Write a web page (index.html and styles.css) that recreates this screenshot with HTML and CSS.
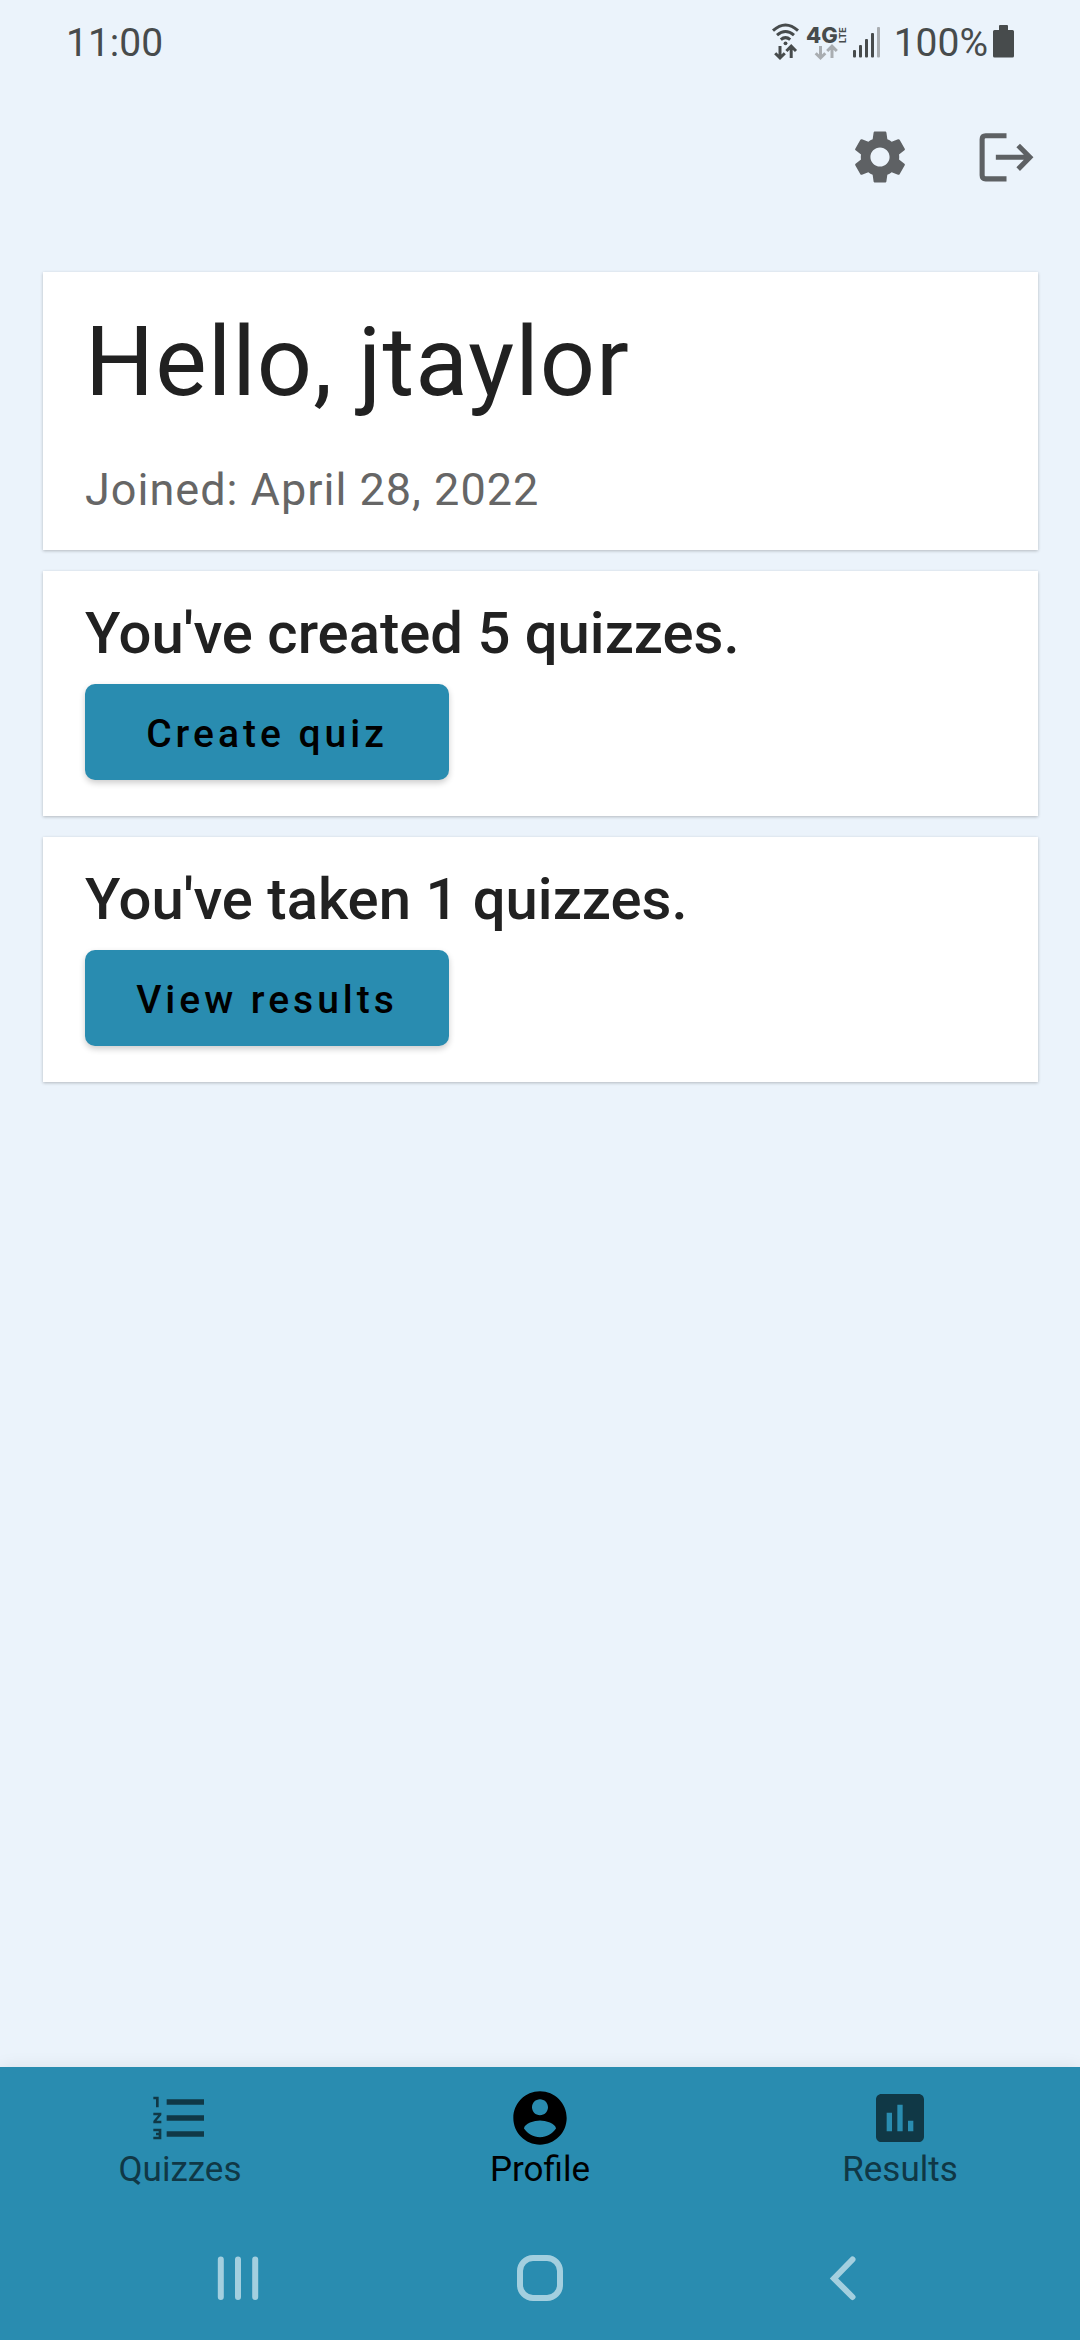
FILE: index.html
```html
<!DOCTYPE html>
<html lang="en">
<head>
<meta charset="utf-8">
<meta name="viewport" content="width=device-width, initial-scale=1">
<title>Profile</title>
<link rel="stylesheet" href="styles.css">
</head>
<body>
<div class="status-bar">
  <span class="clock">11:00</span>
  <div class="status-icons">
    <svg class="wifi" width="30" height="40" viewBox="0 0 30 40" aria-hidden="true">
      <g fill="none" stroke="currentColor" stroke-width="3">
        <path d="M2 8.600Q14.500-2.600 27 8.600"/>
        <path d="M6 13.200Q14.500 5.800 23 13.200"/>
        <path d="M9.800 17.600Q14.500 13.600 19.200 17.600"/>
      </g>
      <circle cx="14.500" cy="21.300" r="1.900" fill="currentColor"/>
      <path d="M9 24v12M4.200 31.200L9 36l4.800-4.800M20.200 36V24.500M15.400 29l4.800-4.800L25 29" fill="none" stroke="currentColor" stroke-width="3"/>
    </svg>
    <svg class="network" width="42" height="40" viewBox="0 0 42 40" aria-label="4G LTE">
      <text class="network-type" x="0" y="21">4G</text>
      <text class="network-sub" x="-21" y="40" transform="rotate(-90)">LTE</text>
      <path d="M14.500 24v12M9.700 31.200l4.800 4.800 4.800-4.800M26 36V24.500M21.200 29l4.800-4.800 4.800 4.800" fill="none" stroke="#a9adb1" stroke-width="3"/>
    </svg>
    <svg class="signal" width="28" height="40" viewBox="0 0 28 40" aria-hidden="true">
      <g fill="currentColor">
        <rect x="1" y="28" width="3" height="7.500" rx="1"/>
        <rect x="7" y="23" width="3" height="12.500" rx="1"/>
        <rect x="13" y="17" width="3" height="18.500" rx="1"/>
        <rect x="19" y="11" width="3" height="24.500" rx="1"/>
      </g>
      <rect x="25" y="5" width="3" height="30.500" rx="1" fill="#a9adb1"/>
    </svg>
    <span class="battery-level">100%</span>
    <svg class="battery" width="21" height="40" viewBox="0 0 21 40" aria-hidden="true">
      <path d="M7 3h7a1 1 0 0 1 1 1v4h4.500A1.500 1.500 0 0 1 21 9.500V34a1.500 1.500 0 0 1-1.500 1.500h-18A1.500 1.500 0 0 1 0 34V9.500A1.500 1.500 0 0 1 1.500 8H6V4a1 1 0 0 1 1-1z" fill="currentColor"/>
    </svg>
  </div>
</div>

<header class="toolbar">
  <button class="icon-button" type="button" aria-label="Settings">
    <svg class="icon" viewBox="0 0 24 24" aria-hidden="true"><path fill="currentColor" d="M19.140 12.940c.04-.3.060-.61.060-.94 0-.32-.02-.64-.07-.94l2.030-1.580c.18-.14.230-.41.120-.61l-1.920-3.320c-.12-.22-.37-.29-.59-.22l-2.390.960c-.5-.38-1.030-.7-1.620-.94l-.36-2.540c-.04-.24-.24-.41-.48-.41h-3.840c-.24 0-.43.170-.47.410l-.36 2.540c-.59.240-1.130.570-1.620.940l-2.390-.96c-.22-.08-.47 0-.59.220L2.740 8.870c-.12.210-.08.470.120.610l2.030 1.580c-.05.300-.09.630-.09.940s.02.640.070.940l-2.030 1.580c-.18.140-.23.410-.12.610l1.920 3.320c.12.220.37.290.59.220l2.390-.96c.5.380 1.030.7 1.620.940l.36 2.540c.05.240.24.410.48.410h3.840c.24 0 .44-.17.470-.41l.36-2.540c.59-.24 1.130-.56 1.620-.94l2.390.960c.22.080.47 0 .59-.22l1.920-3.320c.12-.22.070-.47-.12-.61l-2.010-1.580zM12 15.600c-1.980 0-3.600-1.620-3.600-3.600s1.620-3.600 3.600-3.600 3.600 1.620 3.600 3.600-1.620 3.600-3.600 3.600z"/></svg>
  </button>
  <button class="icon-button" type="button" aria-label="Log out">
    <svg class="icon" viewBox="0 0 63 63" aria-hidden="true"><g fill="none" stroke="currentColor" stroke-width="5"><path d="M32 10.500H11.500Q8 10.500 8 14v35.500Q8 53 11.500 53H32"/><path d="M21.500 31.800H55M43.500 20.200L55 31.800 43.500 43.400"/></g></svg>
  </button>
</header>

<main class="content">
  <section class="card profile-card">
    <h1 class="greeting">Hello, jtaylor</h1>
    <p class="joined">Joined: April 28, 2022</p>
  </section>
  <section class="card">
    <h2 class="stat">You've created 5 quizzes.</h2>
    <button class="action" type="button">Create quiz</button>
  </section>
  <section class="card">
    <h2 class="stat">You've taken 1 quizzes.</h2>
    <button class="action" type="button">View results</button>
  </section>
</main>

<footer class="bottom">
  <nav class="tabs">
    <a class="tab" href="#quizzes">
      <svg class="icon" viewBox="0 0 24 24" aria-hidden="true"><path fill="currentColor" d="M2 17h2v.5H3v1h1v.5H2v1h3v-4H2v1zm1-9h1V4H2v1h1v3zm-1 3h1.800L2 13.100v.9h3v-1H3.200L5 10.900V10H2v1zm5-6v2h14V5H7zm0 14h14v-2H7v2zm0-6h14v-2H7v2z"/></svg>
      <span>Quizzes</span>
    </a>
    <a class="tab tab-active" href="#profile" aria-current="page">
      <svg class="icon" viewBox="0 0 24 24" aria-hidden="true"><path fill="currentColor" d="M12 2C6.480 2 2 6.480 2 12s4.480 10 10 10 10-4.480 10-10S17.520 2 12 2zm0 3c1.660 0 3 1.340 3 3s-1.340 3-3 3-3-1.340-3-3 1.340-3 3-3zm0 14.200c-2.500 0-4.710-1.280-6-3.220.03-1.990 4-3.080 6-3.080 1.990 0 5.970 1.090 6 3.080-1.290 1.940-3.500 3.220-6 3.220z"/></svg>
      <span>Profile</span>
    </a>
    <a class="tab" href="#results">
      <svg class="icon" viewBox="0 0 24 24" aria-hidden="true"><path fill="currentColor" d="M19 3H5c-1.100 0-2 .9-2 2v14c0 1.100.9 2 2 2h14c1.100 0 2-.9 2-2V5c0-1.100-.9-2-2-2zM9 17H7v-7h2v7zm4 0h-2V7h2v10zm4 0h-2v-4h2v4z"/></svg>
      <span>Results</span>
    </a>
  </nav>
  <div class="system-nav">
    <button class="system-button" type="button" aria-label="Recent apps">
      <svg width="48" height="48" viewBox="0 0 48 48" aria-hidden="true"><path d="M6.800 5.500v37.500M24 5.500v37.500M41.200 5.500v37.500" fill="none" stroke="currentColor" stroke-width="6" stroke-linecap="round"/></svg>
    </button>
    <button class="system-button" type="button" aria-label="Home">
      <svg width="48" height="48" viewBox="0 0 48 48" aria-hidden="true"><rect x="4" y="4" width="40" height="40" rx="13" fill="none" stroke="currentColor" stroke-width="6"/></svg>
    </button>
    <button class="system-button" type="button" aria-label="Back">
      <svg width="48" height="48" viewBox="0 0 48 48" aria-hidden="true"><path d="M34.500 5.500L16 24.500l18.500 18.500" fill="none" stroke="currentColor" stroke-width="6" stroke-linecap="round"/></svg>
    </button>
  </div>
</footer>
</body>
</html>
```
FILE: styles.css
```css
* {
  box-sizing: border-box;
}

body {
  margin: 0;
  min-height: 100vh;
  display: flex;
  flex-direction: column;
  background: #ebf3fb;
  color: #212121;
  font-family: Roboto, "Noto Sans", sans-serif;
}

button {
  margin: 0;
  padding: 0;
  border: 0;
  background: none;
  color: inherit;
  font: inherit;
  cursor: pointer;
}

svg {
  display: block;
  flex: none;
}

.icon {
  width: 64px;
  height: 64px;
}

/* Status bar */
.status-bar {
  display: flex;
  align-items: center;
  justify-content: space-between;
  height: 84px;
  padding: 0 66px;
  color: #474b4c;
  font-size: 39px;
  line-height: 48px;
}

.clock,
.battery-level {
  padding-top: 2px;
}

.status-icons {
  display: flex;
  align-items: center;
}

.network {
  margin: 0 4px 0 5px;
}

.network-type {
  font-family: Inter, sans-serif;
  font-size: 22px;
  font-weight: 800;
  fill: currentColor;
}

.network-sub {
  font-family: Inter, sans-serif;
  font-size: 9px;
  font-weight: 700;
  fill: currentColor;
}

.battery-level {
  margin: 0 5px 0 14px;
}

/* Toolbar */
.toolbar {
  display: flex;
  justify-content: flex-end;
  padding: 10px 11px 0;
  color: #5e6164;
}

.icon-button {
  display: flex;
  align-items: center;
  justify-content: center;
  width: 126px;
  height: 126px;
}

/* Cards */
.content {
  flex: 1;
  display: flex;
  flex-direction: column;
  gap: 21px;
  padding: 52px 42px 42px 43px;
}

.card {
  padding: 28px 42px 36px;
  background: #fff;
  box-shadow: 0 1px 3px rgba(0, 0, 0, 0.24);
}

.profile-card {
  padding-bottom: 28px;
}

.greeting {
  margin: 0 0 34px;
  font-size: 97px;
  font-weight: 400;
  line-height: 124px;
  letter-spacing: 1px;
}

.joined {
  margin: 0;
  color: #666;
  font-size: 45px;
  line-height: 64px;
  letter-spacing: 1px;
}

.stat {
  margin: 0 0 17px;
  font-size: 58px;
  font-weight: 500;
  line-height: 68px;
}

.action {
  display: block;
  min-width: 364px;
  height: 96px;
  padding: 4px 42px 0;
  border-radius: 10px;
  background: #298cb0;
  box-shadow: 0 3px 6px rgba(0, 0, 0, 0.2);
  color: #000;
  font-size: 39px;
  font-weight: 500;
  letter-spacing: 4px;
}

/* Bottom navigation */
.bottom {
  background: #298cb0;
  box-shadow: 0 0 16px rgba(0, 0, 0, 0.08);
}

.tabs {
  display: grid;
  grid-template-columns: repeat(3, 1fr);
  padding: 19px 0 26px;
}

.tab {
  display: flex;
  flex-direction: column;
  align-items: center;
  color: #103846;
  font-size: 35px;
  line-height: 40px;
  text-decoration: none;
}

.tab-active {
  color: #000;
}

.system-nav {
  display: grid;
  grid-template-columns: repeat(3, 1fr);
  padding: 0 8%;
}

.system-button {
  display: flex;
  align-items: center;
  justify-content: center;
  height: 124px;
  color: #a3cfdf;
}
```
